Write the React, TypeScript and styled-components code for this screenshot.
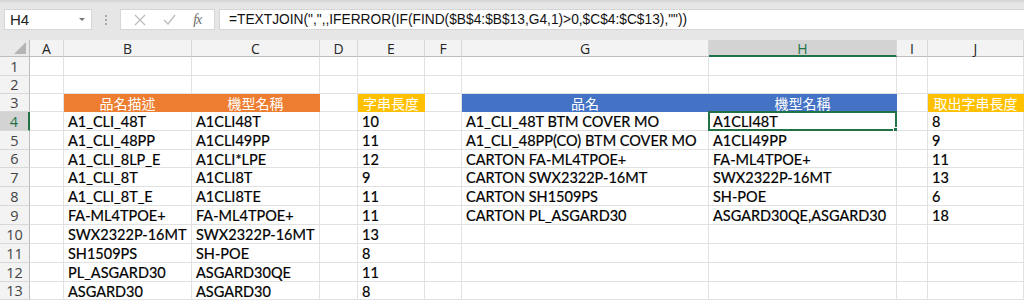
import React from 'react'
import styled, { createGlobalStyle } from 'styled-components'

const GlobalStyle = createGlobalStyle`
  html, body {
    margin: 0;
    padding: 0;
    background: #ffffff;
    overflow: hidden;
  }
`

const Window = styled.div`
  width: 1024px;
  height: 302px;
  overflow: hidden;
  background: #ffffff;
`

const FormulaBar = styled.div`
  height: 40px;
  box-sizing: border-box;
  display: flex;
  align-items: flex-start;
  padding: 9px 0 0 4px;
  background: linear-gradient(#d4d4d4 0, #e6e6e6 4px, #e6e6e6 100%);
`

const NameBox = styled.div`
  width: 88px;
  height: 21px;
  box-sizing: border-box;
  background: #fff;
  border: 1px solid #d6d6d6;
  display: flex;
  align-items: center;
  justify-content: space-between;
  padding: 0 6px 0 5px;
  font-family: 'Liberation Sans', Arial, sans-serif;
  font-size: 15px;
  color: #222;
`

const Caret = styled.span`
  width: 0;
  height: 0;
  border-left: 3px solid transparent;
  border-right: 3px solid transparent;
  border-top: 3px solid #777;
`

const Grip = styled.div`
  width: 28px;
  height: 21px;
  display: flex;
  flex-direction: column;
  align-items: center;
  justify-content: center;
  gap: 2px;

  span {
    width: 2px;
    height: 2px;
    background: #a9a9a9;
  }
`

const FxBox = styled.div`
  width: 95px;
  height: 21px;
  box-sizing: border-box;
  background: #fff;
  border: 1px solid #d6d6d6;
  display: flex;
  align-items: center;
  justify-content: space-around;
  padding: 0 4px;
  margin-right: 4px;
`

const FxLabel = styled.span`
  font-family: 'Liberation Serif', 'Times New Roman', serif;
  font-style: italic;
  font-size: 14px;
  color: #6b6b6b;
  letter-spacing: -1px;
`

const FormulaInput = styled.div`
  flex: 1;
  height: 21px;
  box-sizing: border-box;
  background: #fff;
  border: 1px solid #d6d6d6;
  border-right: none;
  padding-left: 9px;
  display: flex;
  align-items: center;
  font-family: 'Liberation Sans', Arial, sans-serif;
  font-size: 13.75px;
  color: #111;
  white-space: nowrap;
`

const Sheet = styled.div`
  display: grid;
  grid-template-columns: 30px 34px 128px 128px 38px 67px 37px 247px 188px 31px 96px;
  grid-template-rows: 17px 19px 18px 18px 19px 19px 18px 19px 19px 19px 19px 19px 19px 18px;
`

const Corner = styled.div`
  position: relative;
  background: #e9e9e9;
  border-right: 1px solid #bdbdbd;
  border-bottom: 1px solid #bdbdbd;
  box-sizing: border-box;

  &::after {
    content: '';
    position: absolute;
    right: 3px;
    bottom: 2px;
    width: 0;
    height: 0;
    border-left: 12px solid transparent;
    border-bottom: 12px solid #b5b5b5;
  }
`

const ColHeader = styled.div<{ $active?: boolean }>`
  box-sizing: border-box;
  background: ${(p) => (p.$active ? '#d3d3d3' : '#f3f3f3')};
  border-right: 1px solid #d8d8d8;
  border-bottom: ${(p) => (p.$active ? '2px solid #217346' : '1px solid #bdbdbd')};
  display: flex;
  align-items: center;
  justify-content: center;
  font-family: 'Open Sans', 'Noto Sans', sans-serif;
  font-size: 14px;
  color: ${(p) => (p.$active ? '#217346' : '#262626')};
  padding-top: ${(p) => (p.$active ? '1px' : '0')};
`

const RowHeader = styled.div<{ $active?: boolean }>`
  box-sizing: border-box;
  background: ${(p) => (p.$active ? '#d3d3d3' : '#f3f3f3')};
  border-bottom: 1px solid #d8d8d8;
  border-right: ${(p) => (p.$active ? '2px solid #217346' : '1px solid #bdbdbd')};
  display: flex;
  align-items: center;
  justify-content: center;
  font-family: 'Open Sans', 'Noto Sans', sans-serif;
  font-size: 14.5px;
  color: ${(p) => (p.$active ? '#217346' : '#444')};
`

type Fill = 'orange' | 'blue' | 'gold'

const fills: Record<Fill, string> = {
  orange: '#ed7d31',
  blue: '#4472c4',
  gold: '#ffc000'
}

const Cell = styled.div<{ $fill?: Fill }>`
  position: relative;
  box-sizing: border-box;
  border-right: 1px solid ${(p) => (p.$fill ? fills[p.$fill] : '#e1e1e1')};
  border-bottom: 1px solid ${(p) => (p.$fill ? fills[p.$fill] : '#e1e1e1')};
  background: ${(p) => (p.$fill ? fills[p.$fill] : '#fff')};
  display: flex;
  align-items: center;
  justify-content: ${(p) => (p.$fill ? 'center' : 'flex-start')};
  padding-left: ${(p) => (p.$fill ? '0' : '4px')};
  padding-top: 1px;
  white-space: nowrap;
  overflow: visible;
  font-family: ${(p) =>
    p.$fill ? "'Noto Sans CJK TC', 'Noto Sans CJK SC', sans-serif" : "Lato, 'Open Sans', sans-serif"};
  font-size: ${(p) => (p.$fill ? '14px' : '14.5px')};
  color: ${(p) => (p.$fill ? '#fff' : '#000')};
  -webkit-text-stroke: ${(p) => (p.$fill ? '0' : '0.2px #000')};
`

const Selection = styled.div`
  position: absolute;
  top: -1px;
  left: -1px;
  right: -1px;
  bottom: -1px;
  border: 2px solid #217346;
  pointer-events: none;

  &::after {
    content: '';
    position: absolute;
    right: -4px;
    bottom: -4px;
    width: 4px;
    height: 4px;
    background: #217346;
    border: 1px solid #fff;
  }
`

const columns = ['A', 'B', 'C', 'D', 'E', 'F', 'G', 'H', 'I', 'J']

type CellDef = { text?: string; fill?: Fill }

const headerRow: Record<string, CellDef> = {
  B: { text: '品名描述', fill: 'orange' },
  C: { text: '機型名稱', fill: 'orange' },
  E: { text: '字串長度', fill: 'gold' },
  G: { text: '品名', fill: 'blue' },
  H: { text: '機型名稱', fill: 'blue' },
  J: { text: '取出字串長度', fill: 'gold' }
}

const colB = ['A1_CLI_48T', 'A1_CLI_48PP', 'A1_CLI_8LP_E', 'A1_CLI_8T', 'A1_CLI_8T_E', 'FA-ML4TPOE+', 'SWX2322P-16MT', 'SH1509PS', 'PL_ASGARD30', 'ASGARD30']
const colC = ['A1CLI48T', 'A1CLI49PP', 'A1CLI*LPE', 'A1CLI8T', 'A1CLI8TE', 'FA-ML4TPOE+', 'SWX2322P-16MT', 'SH-POE', 'ASGARD30QE', 'ASGARD30']
const colE = ['10', '11', '12', '9', '11', '11', '13', '8', '11', '8']
const colG = ['A1_CLI_48T BTM COVER MO', 'A1_CLI_48PP(CO) BTM COVER MO', 'CARTON FA-ML4TPOE+', 'CARTON SWX2322P-16MT', 'CARTON SH1509PS', 'CARTON PL_ASGARD30']
const colH = ['A1CLI48T', 'A1CLI49PP', 'FA-ML4TPOE+', 'SWX2322P-16MT', 'SH-POE', 'ASGARD30QE,ASGARD30']
const colJ = ['8', '9', '11', '13', '6', '18']

function cellAt(row: number, col: string): CellDef {
  if (row === 3) return headerRow[col] || {}
  const i = row - 4
  if (i < 0) return {}
  const lists: Record<string, string[]> = { B: colB, C: colC, E: colE, G: colG, H: colH, J: colJ }
  const list = lists[col]
  return { text: list ? list[i] : undefined }
}

const CrossIcon = () => (
  <svg width="12" height="12" viewBox="0 0 12 12">
    <path d="M1 1 L11 11 M11 1 L1 11" stroke="#bcbcbc" strokeWidth="1.2" fill="none" />
  </svg>
)

const CheckIcon = () => (
  <svg width="13" height="11" viewBox="0 0 13 11">
    <path d="M1 6 L5 10 L12 1" stroke="#bcbcbc" strokeWidth="1.3" fill="none" />
  </svg>
)

const App: React.FC = () => {
  const rows = Array.from({ length: 13 }, (_, i) => i + 1)

  return (
    <>
      <GlobalStyle />
      <Window>
        <FormulaBar>
          <NameBox>
            H4
            <Caret />
          </NameBox>
          <Grip>
            <span />
            <span />
            <span />
          </Grip>
          <FxBox>
            <CrossIcon />
            <CheckIcon />
            <FxLabel>fx</FxLabel>
          </FxBox>
          <FormulaInput>=TEXTJOIN(",",,IFERROR(IF(FIND($B$4:$B$13,G4,1)&gt;0,$C$4:$C$13),""))</FormulaInput>
        </FormulaBar>

        <Sheet>
          <Corner />
          {columns.map((c) => (
            <ColHeader key={c} $active={c === 'H'}>
              {c}
            </ColHeader>
          ))}
          {rows.map((r) => (
            <React.Fragment key={r}>
              <RowHeader $active={r === 4}>{r}</RowHeader>
              {columns.map((c) => {
                const def = cellAt(r, c)
                return (
                  <Cell key={c} $fill={def.fill}>
                    {def.text}
                    {r === 4 && c === 'H' && <Selection />}
                  </Cell>
                )
              })}
            </React.Fragment>
          ))}
        </Sheet>
      </Window>
    </>
  )
}

export default App
